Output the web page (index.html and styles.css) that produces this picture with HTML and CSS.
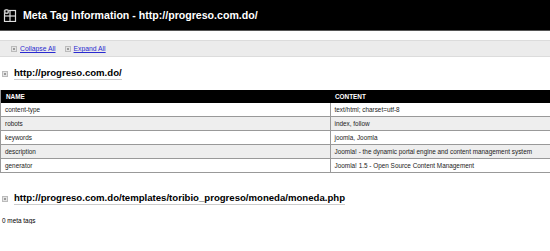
FILE: index.html
```html
<!DOCTYPE html>
<html lang="en">
<head>
  <meta charset="UTF-8">
  <title>Meta Tag Information</title>
  <link rel="stylesheet" href="styles.css">
</head>
<body>
  <div class="page-header">
    <svg class="page-header__icon" width="14" height="14" viewBox="0 0 14 14">
      <rect x="1.5" y="2.5" width="11" height="11" fill="none" stroke="#ddd" stroke-width="1.2"/>
      <line x1="7" y1="2.5" x2="7" y2="13.5" stroke="#ddd" stroke-width="1.2"/>
      <line x1="1.5" y1="8" x2="12.5" y2="8" stroke="#ddd" stroke-width="1.2"/>
      <circle cx="3.5" cy="3.5" r="2.6" fill="#bbb"/>
      <circle cx="3.5" cy="3.5" r="1" fill="#000"/>
    </svg>
    <h1 class="page-header__title">Meta Tag Information - http://progreso.com.do/</h1>
  </div>

  <div class="toolbar">
    <span class="toggle-icon"></span><a href="#" class="toolbar__link">Collapse All</a>
    <span class="toggle-icon"></span><a href="#" class="toolbar__link">Expand All</a>
  </div>

  <div class="section">
    <div class="section__head">
      <span class="toggle-icon"></span>
      <h2 class="section__title">http://progreso.com.do/</h2>
    </div>
    <table class="meta-table">
      <thead>
        <tr><th class="meta-table__name">NAME</th><th>CONTENT</th></tr>
      </thead>
      <tbody>
        <tr><td>content-type</td><td>text/html; charset=utf-8</td></tr>
        <tr class="is-odd"><td>robots</td><td>index, follow</td></tr>
        <tr><td>keywords</td><td>joomla, Joomla</td></tr>
        <tr class="is-odd"><td>description</td><td>Joomla! - the dynamic portal engine and content management system</td></tr>
        <tr><td>generator</td><td>Joomla! 1.5 - Open Source Content Management</td></tr>
      </tbody>
    </table>
  </div>

  <div class="section">
    <div class="section__head">
      <span class="toggle-icon"></span>
      <h2 class="section__title">http://progreso.com.do/templates/toribio_progreso/moneda/moneda.php</h2>
    </div>
    <p class="section__empty">0 meta tags</p>
  </div>
</body>
</html>
```

FILE: styles.css
```css
/* General styles */
body {
  margin: 0;
  font-family: "Liberation Sans", Arial, sans-serif;
  color: #000;
  background: #fff;
}

.page-header {
  display: flex;
  align-items: center;
  height: 30px;
  background: #000;
  border-bottom: 1px solid #555;
  padding-left: 3px;
}

.page-header__icon {
  margin-right: 6px;
}

.page-header__title {
  margin: 0;
  color: #fff;
  font-size: 10.6px;
  font-weight: bold;
}

.toolbar {
  display: flex;
  align-items: center;
  margin-top: 9px;
  height: 15px;
  background: #ececec;
  border-top: 1px solid #dcdcdc;
  border-bottom: 1px solid #dcdcdc;
  padding-left: 11px;
}

.toolbar__link {
  font-size: 6.8px;
  color: #2a2ad0;
  margin-right: 9px;
}

.toggle-icon {
  display: inline-block;
  width: 4px;
  height: 4px;
  border: 1px solid #bbb;
  background: #e4e4e4;
  margin-right: 3px;
  position: relative;
}

.toggle-icon::after {
  content: "";
  position: absolute;
  left: 1px;
  top: 1px;
  width: 2px;
  height: 2px;
  background: #999;
}

.section__head {
  display: flex;
  align-items: center;
  padding: 10px 0 0 2px;
  margin-bottom: 10px;
}

.section__head .toggle-icon {
  margin-right: 6px;
}

.section__title {
  margin: 0;
  font-size: 9.6px;
  font-weight: bold;
  border-bottom: 1px solid #ccc;
  padding-bottom: 1px;
}

.meta-table {
  width: 100%;
  border-collapse: collapse;
  font-size: 6.4px;
  border-left: 1px solid #999;
  margin-bottom: 9px;
}

.meta-table th {
  background: #000;
  color: #fff;
  text-align: left;
  font-weight: bold;
  height: 13px;
  padding: 0 0 0 5px;
}

.meta-table__name {
  width: 324px;
}

.meta-table td {
  height: 13px;
  padding: 0 0 0 4px;
  border-bottom: 1px solid #999;
  color: #222;
}

.meta-table td + td {
  border-left: 1px solid #999;
}

.meta-table .is-odd td {
  background: #eee;
}

.section__empty {
  margin: 0;
  padding: 2px 0 0 2px;
  font-size: 6.4px;
}
```
